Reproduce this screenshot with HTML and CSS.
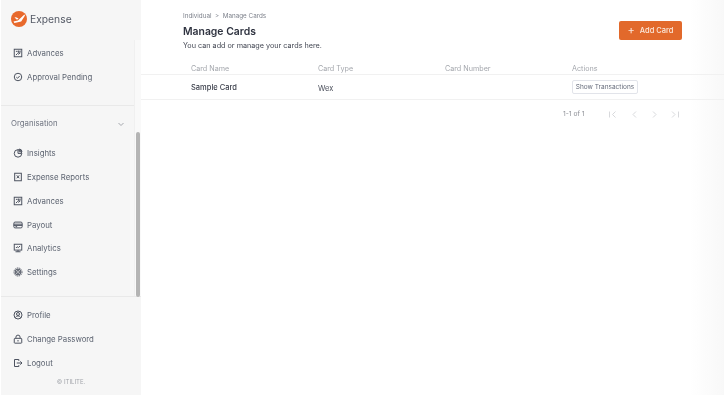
FILE: index.html
```html
<!DOCTYPE html>
<html lang="en">
<head>
    <meta charset="UTF-8">
    <meta name="viewport" content="width=device-width, initial-scale=1.0">
    <title>Manage Cards - Expense</title>
    <link rel="stylesheet" href="styles.css">
</head>
<body>
    <div class="app">
        <aside class="sidebar">
            <div class="brand">
                <svg class="brand-logo" viewBox="0 0 16 16">
                    <circle cx="8" cy="8" r="8" fill="#e8692c"/>
                    <path d="M2.5 10.6 L7 9.6 L13.4 3.6 L14 4.4 L10.2 10.4 L3.4 12 Z" fill="#fff"/>
                    <path d="M3.5 6.6 L5 6.2 L7.6 7.6 L6 8.8 Z" fill="#fff"/>
                </svg>
                <span class="brand-name">Expense</span>
            </div>

            <div class="nav-area">
                <div class="nav-scroll">
                    <div class="nav-group nav-group-top">
                        <a class="nav-item">
                            <svg class="nav-icon" viewBox="0 0 12 12"><rect x="1.5" y="1.5" width="9" height="9"/><path d="M3.5 4h2M3.5 8.5l2-2 1.5 1 1.500-1.500M6.500 3v2.500l1-.7 1 .7V3"/></svg>
                            <span>Advances</span>
                        </a>
                        <a class="nav-item">
                            <svg class="nav-icon" viewBox="0 0 12 12"><circle cx="6" cy="6" r="4.500"/><path d="M4 6.200l1.500 1.300L8 4.800"/></svg>
                            <span>Approval Pending</span>
                        </a>
                    </div>

                    <div class="nav-section">
                        <span>Organisation</span>
                        <svg class="nav-chevron" viewBox="0 0 8 8"><path d="M1.500 3l2.500 2.500L6.500 3"/></svg>
                    </div>

                    <div class="nav-group nav-group-org">
                        <a class="nav-item">
                            <svg class="nav-icon" viewBox="0 0 12 12"><circle cx="6" cy="6.500" r="4.500"/><path d="M6 2v4.500h4.500M7.500 1.200a3.500 3.500 0 0 1 3.300 3.300H7.500z"/></svg>
                            <span>Insights</span>
                        </a>
                        <a class="nav-item">
                            <svg class="nav-icon" viewBox="0 0 12 12"><rect x="2" y="1.500" width="8" height="9"/><path d="M4.500 4l3 3.500M7.500 4l-3 3.500"/></svg>
                            <span>Expense Reports</span>
                        </a>
                        <a class="nav-item">
                            <svg class="nav-icon" viewBox="0 0 12 12"><rect x="1.500" y="1.500" width="9" height="9"/><path d="M3.500 4h2M3.500 8.500l2-2 1.500 1 1.500-1.500M6.500 3v2.500l1-.7 1 .7V3"/></svg>
                            <span>Advances</span>
                        </a>
                        <a class="nav-item">
                            <svg class="nav-icon" viewBox="0 0 12 12"><rect x="1" y="2.500" width="10" height="7" rx="1.500"/><path d="M1 5h10M1 6.500h10M3 8h2"/></svg>
                            <span>Payout</span>
                        </a>
                        <a class="nav-item">
                            <svg class="nav-icon" viewBox="0 0 12 12"><rect x="1.500" y="1.500" width="9" height="7"/><path d="M3.500 6l1.500-1.500 1.500 1 2-2M3 10.500h6M6 8.500v2"/></svg>
                            <span>Analytics</span>
                        </a>
                        <a class="nav-item">
                            <svg class="nav-icon" viewBox="0 0 12 12"><circle cx="6" cy="6" r="1.700"/><circle cx="6" cy="6" r="3.400"/><circle cx="6" cy="6" r="4.800" stroke-dasharray="1.500 .8"/></svg>
                            <span>Settings</span>
                        </a>
                    </div>
                </div>
                <div class="scroll-track"><div class="scroll-thumb"></div></div>
            </div>

            <div class="nav-footer">
                <a class="nav-item">
                    <svg class="nav-icon" viewBox="0 0 12 12"><circle cx="6" cy="6" r="4.800"/><circle cx="6" cy="4.800" r="1.800"/><path d="M2.800 9.200c.8-1.500 1.800-2 3.200-2s2.400.5 3.200 2"/></svg>
                    <span>Profile</span>
                </a>
                <a class="nav-item">
                    <svg class="nav-icon" viewBox="0 0 12 12"><rect x="1.500" y="5.200" width="9" height="5.800" rx=".8"/><path d="M3.500 5.200V3.800a2.500 2.500 0 0 1 5 0v1.400M6 7.200v1.800"/></svg>
                    <span>Change Password</span>
                </a>
                <a class="nav-item">
                    <svg class="nav-icon" viewBox="0 0 12 12"><path d="M7 3.500V1.800H1.800v8.400H7V8.500M4.500 6h6.200M8.800 4l2 2-2 2"/></svg>
                    <span>Logout</span>
                </a>
                <p class="copyright">© ITILITE.</p>
            </div>
        </aside>

        <main class="content">
            <div class="page-head">
                <div class="page-titles">
                    <p class="breadcrumb">Individual &nbsp;&gt;&nbsp; Manage Cards</p>
                    <h1>Manage Cards</h1>
                    <p class="page-sub">You can add or manage your cards here.</p>
                </div>
                <button class="add-btn"><span class="add-plus">+</span> Add Card</button>
            </div>

            <div class="card-table">
                <div class="table-row table-head">
                    <span>Card Name</span>
                    <span>Card Type</span>
                    <span>Card Number</span>
                    <span>Actions</span>
                </div>
                <div class="table-row table-body">
                    <span class="card-name">Sample Card</span>
                    <span class="card-type">Wex</span>
                    <span></span>
                    <span><button class="txn-btn">Show Transactions</button></span>
                </div>
            </div>

            <div class="pager">
                <span class="pager-count">1-1 of 1</span>
                <svg class="pager-icons" viewBox="0 0 72 7">
                    <path d="M.5 .5v6M6.500 .5l-3 3 3 3"/>
                    <path d="M27 .5l-3 3 3 3"/>
                    <path d="M44 .5l3 3-3 3"/>
                    <path d="M63 .5l3 3-3 3M69.500 .5v6"/>
                </svg>
            </div>
        </main>
    </div>
</body>
</html>
```

FILE: styles.css
```css
* {
    margin: 0;
    padding: 0;
    box-sizing: border-box;
    font-family: 'Inter', sans-serif;
}

body {
    background: #fff;
    height: 401px;
    overflow: hidden;
}

.app {
    display: flex;
    height: 395px;
    padding-left: 1px;
    filter: blur(0.5px);
    background: linear-gradient(to right, #fff 690px, #f8f8f8 724px);
}

/* sidebar */
.sidebar {
    width: 140px;
    flex-shrink: 0;
    background: #f6f6f6;
    display: flex;
    flex-direction: column;
}

.brand {
    height: 40px;
    padding: 0 0 3px 10px;
    display: flex;
    align-items: center;
    gap: 3px;
}

.brand-logo {
    width: 16px;
    height: 16px;
}

.brand-name {
    font-size: 10.3px;
    color: #555a66;
}

.nav-area {
    height: 257px;
    display: flex;
    border-bottom: 1px solid #e9e9e9;
}

.nav-scroll {
    flex: 1;
}

.nav-group-top {
    padding: 1px 0 16px;
    border-bottom: 1px solid #e9e9e9;
}

.nav-item {
    height: 24px;
    padding-left: 12px;
    display: flex;
    align-items: center;
    gap: 4px;
    font-size: 7.8px;
    color: #5c6370;
}

.nav-group-org .nav-item {
    height: 23.8px;
}

.nav-icon {
    width: 10px;
    height: 10px;
    flex-shrink: 0;
    fill: none;
    stroke: #4d5360;
    stroke-width: 1.2;
}

.nav-section {
    height: 35.4px;
    padding: 0 9px 2px 10px;
    display: flex;
    align-items: center;
    justify-content: space-between;
    font-size: 7.8px;
    color: #6f7480;
}

.nav-chevron {
    width: 8px;
    height: 8px;
    margin-top: 3px;
    fill: none;
    stroke: #a5a8ae;
    stroke-width: 1;
}

.scroll-track {
    width: 7px;
    background: #f9f9f9;
    border-left: 1px solid #f0f0f0;
    padding: 92px 1px 0 1px;
}

.scroll-thumb {
    height: 165px;
    background: #b4b4b4;
    border-radius: 2px;
}

.nav-footer {
    padding-top: 6px;
}

.copyright {
    margin-top: 3px;
    text-align: center;
    font-size: 6px;
    color: #a2a5ab;
}

/* main */
.content {
    flex: 1;
}

.page-head {
    height: 65px;
    padding: 12px 42px 0 42px;
    display: flex;
    justify-content: space-between;
    align-items: flex-start;
}

.breadcrumb {
    font-size: 6.3px;
    line-height: 8px;
    color: #7d818b;
}

.page-head h1 {
    margin-top: 5px;
    font-size: 10.4px;
    line-height: 14px;
    font-weight: 600;
    color: #2f3340;
}

.page-sub {
    margin-top: 1px;
    font-size: 7.24px;
    line-height: 11px;
    color: #444854;
}

.add-btn {
    width: 63px;
    height: 19px;
    margin-top: 9px;
    border: none;
    border-radius: 2px;
    background: #e2692b;
    color: #fbe9dc;
    font-size: 7.5px;
    font-weight: 500;
    display: flex;
    align-items: center;
    justify-content: center;
    gap: 5px;
}

.add-plus {
    font-size: 11px;
    line-height: 11px;
    font-weight: 400;
}

.table-row {
    display: grid;
    grid-template-columns: repeat(4, 127px) 1fr;
    padding-left: 50px;
    align-items: center;
    border-bottom: 1px solid #f1f1f1;
}

.table-head {
    height: 10px;
    padding-bottom: 2px;
    font-size: 7.2px;
    color: #a4a7ad;
    line-height: 7px;
}

.table-body {
    height: 25px;
    font-size: 7.5px;
}

.card-name {
    font-weight: 500;
    color: #3a3e4a;
}

.card-type {
    color: #4c505c;
    padding-top: 2px;
}

.txn-btn {
    width: 66px;
    height: 14px;
    background: #fff;
    border: 1px solid #e2e4ea;
    border-radius: 2px;
    font-size: 6.5px;
    color: #656b7a;
}

.pager {
    display: flex;
    align-items: center;
    padding: 10px 0 0 422px;
}

.pager-count {
    width: 46px;
    font-size: 6.7px;
    color: #8b8e95;
}

.pager-icons {
    width: 72px;
    height: 7px;
    margin-top: 1px;
    fill: none;
    stroke: #d8d9dc;
    stroke-width: 1;
}
```
